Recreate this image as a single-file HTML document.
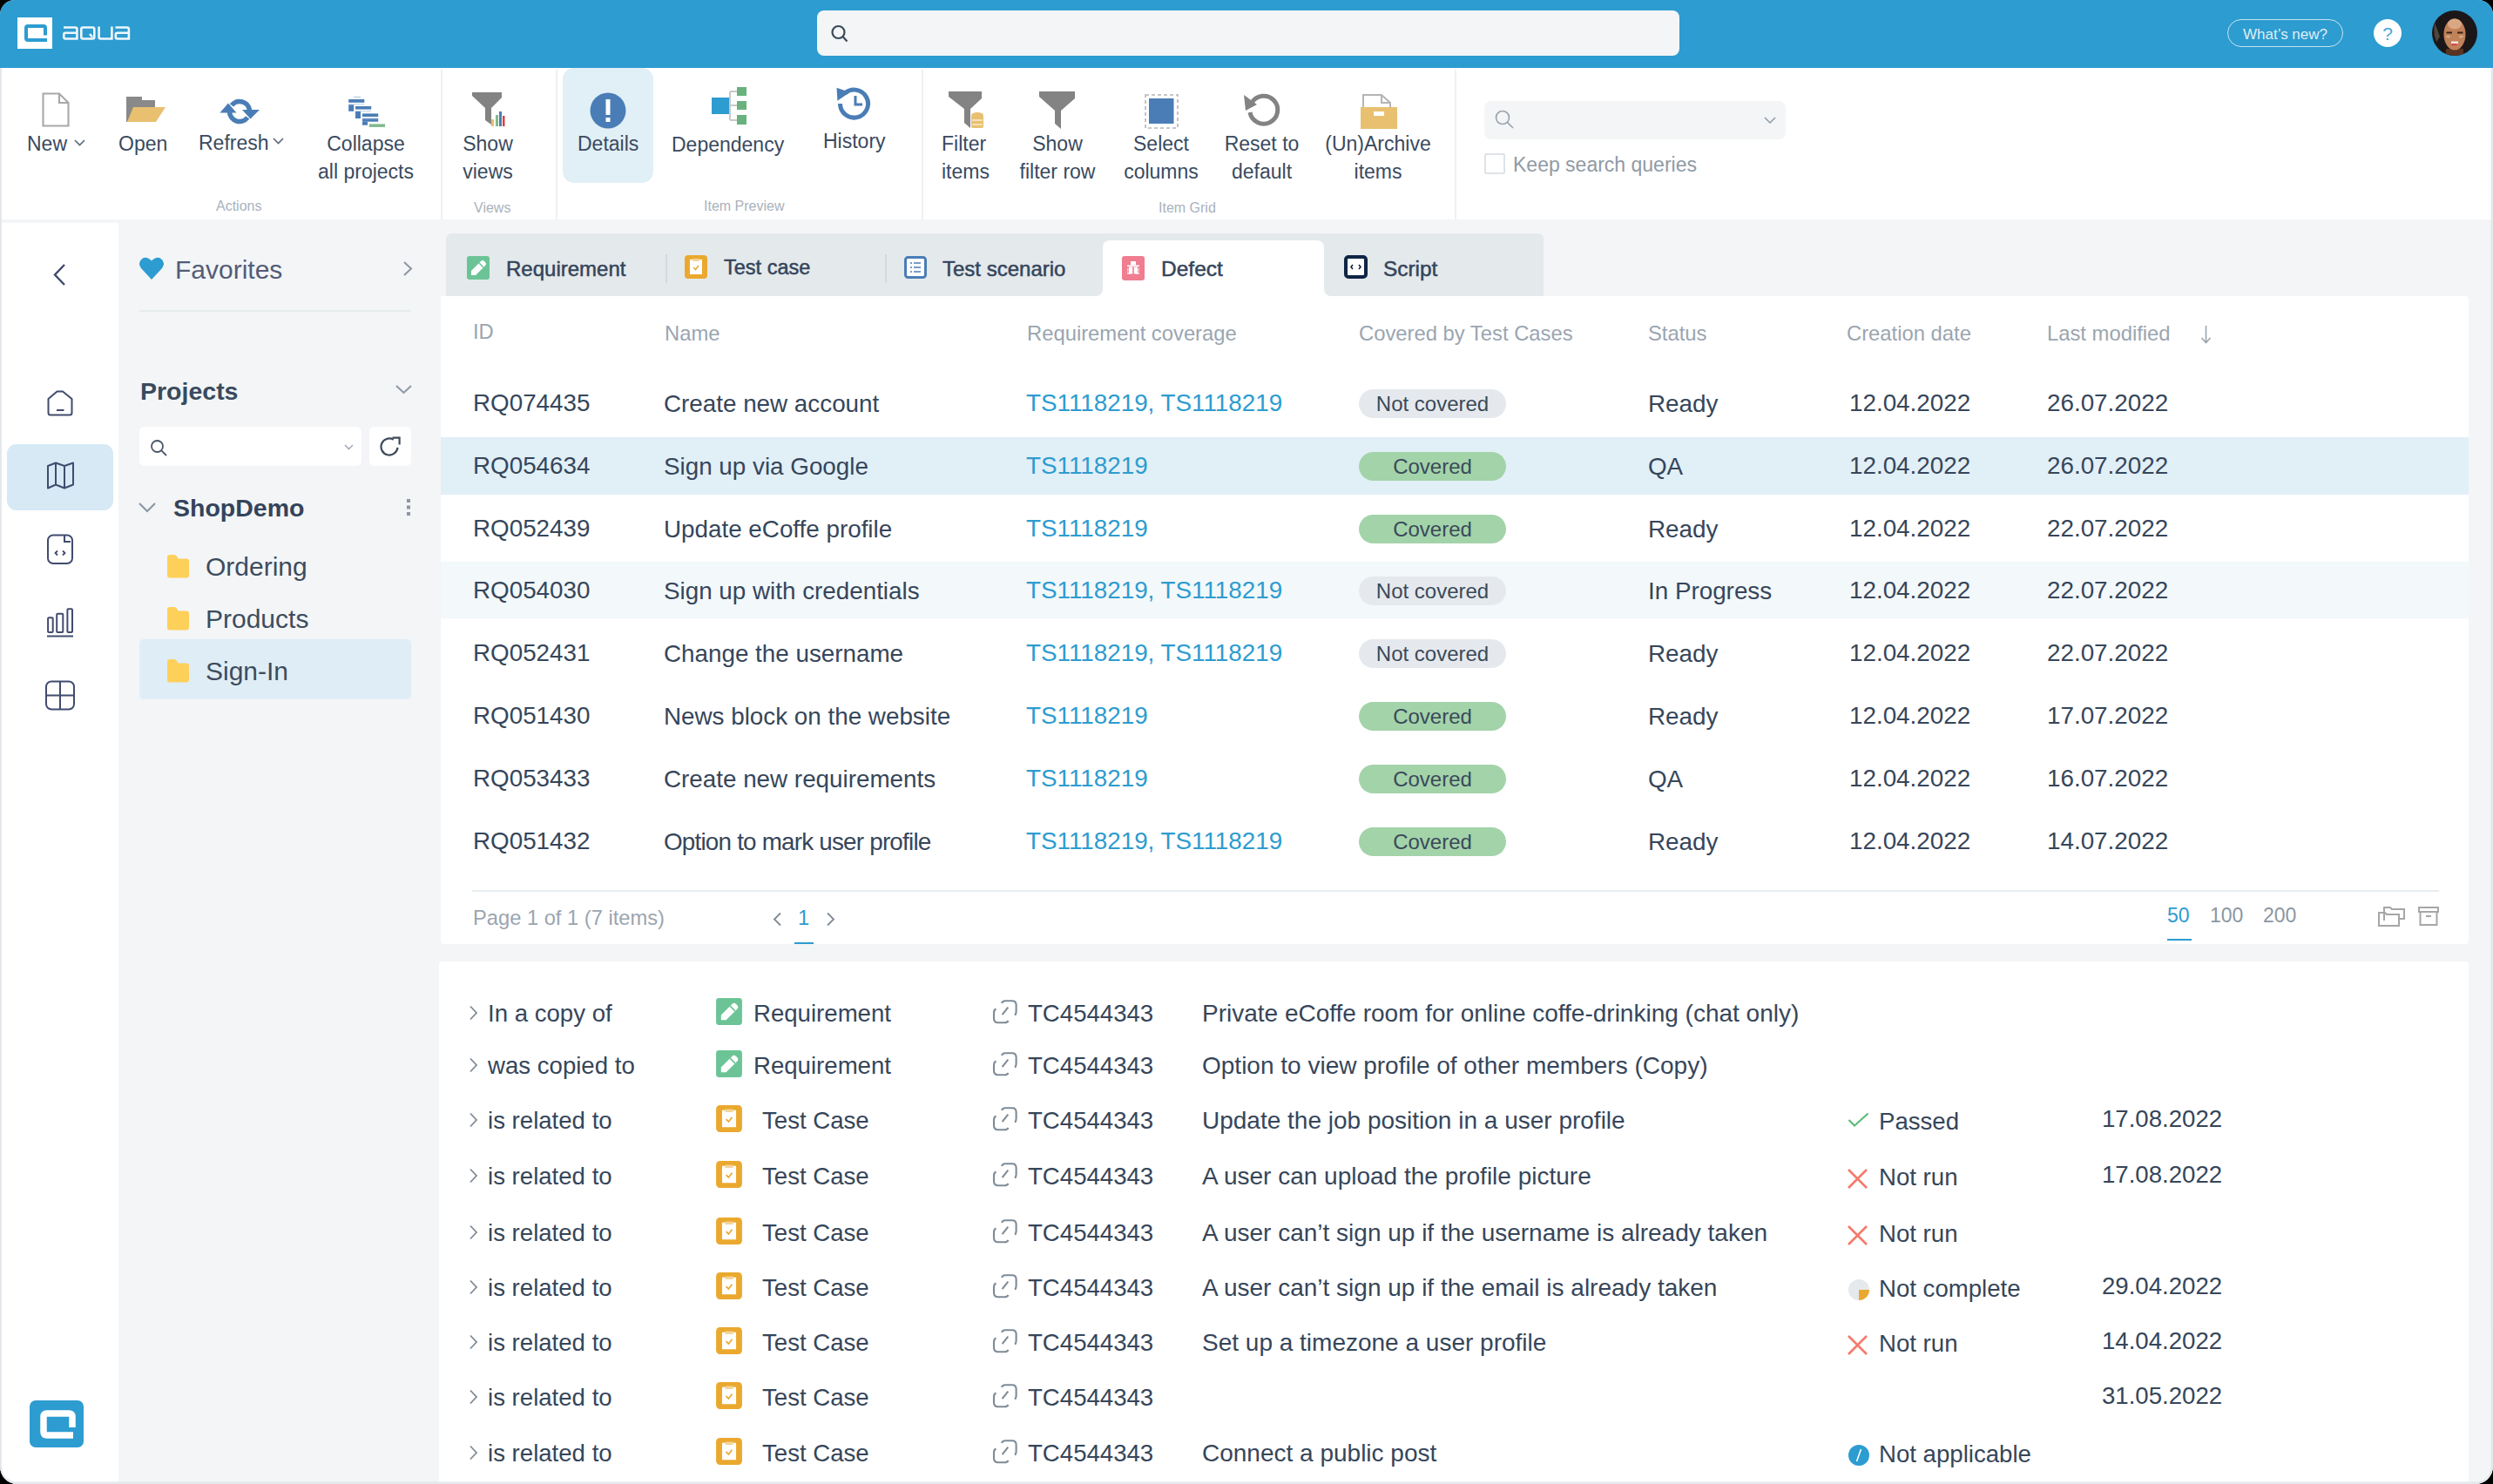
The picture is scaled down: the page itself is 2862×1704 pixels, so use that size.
<!DOCTYPE html>
<html><head><meta charset="utf-8">
<style>
*{box-sizing:border-box;margin:0;padding:0}
html,body{width:2862px;height:1704px;background:#000;overflow:hidden}
body{font-family:"Liberation Sans",sans-serif;color:#33435a;position:relative}
.app{position:absolute;left:0;top:0;width:2862px;height:1704px;border-radius:17px 17px 20px 20px;overflow:hidden;background:#f3f5f7}
.a{position:absolute;white-space:nowrap}
svg{position:absolute;overflow:visible}
.hdr{left:0;top:0;width:2862px;height:78px;background:#2d9cd0}
.tb{left:0;top:78px;width:2862px;height:174px;background:#fff}
.tl{font-size:23px;color:#3a4a5e;line-height:31.5px;text-align:center}
.gl{font-size:16px;color:#a9b2bb;line-height:16px}
.th{font-size:23.8px;line-height:30px;color:#9aa5b0}
.td{font-size:27.8px;line-height:34px;color:#36465a}
.lk{color:#2d9cd0}
.pill{width:169px;height:33px;border-radius:17px;font-size:24px;line-height:33px;text-align:center;color:#3a4a5a}
.cv{background:#a3d3a9}
.nc{background:#e5e9ed}
.tr{font-size:27.6px;line-height:32px;color:#36465a}
.sep{width:2px;background:#edf1f4}
</style></head><body>
<div class="app">
<!-- HEADER -->
<div class="a hdr"></div>
<div class="a" style="left:20px;top:20px;width:40px;height:36px;background:#fff"></div>
<svg style="left:20px;top:20px" width="40" height="36" viewBox="0 0 40 36"><path d="M32 20.5 V12 Q32 10 30 10 H12 Q10 10 10 12 V24 Q10 26 12 26 H34" fill="none" stroke="#2d9cd0" stroke-width="4"/></svg>
<svg style="left:72px;top:28px" width="78" height="20" viewBox="0 0 78 20">
<g fill="none" stroke="#eef7fc" stroke-width="2.6">
<path d="M1 3.5 H14.4 Q16.4 3.5 16.4 5.5 V16.5 H3.3 Q1.3 16.5 1.3 14.5 V11.8 Q1.3 9.8 3.3 9.8 H16.4"/>
<path d="M23.3 3.5 H34.3 Q36.3 3.5 36.3 5.5 V14.5 Q36.3 16.5 34.3 16.5 H23.3 Q21.3 16.5 21.3 14.5 V5.5 Q21.3 3.5 23.3 3.5Z M31 11 L34 14.5"/>
<path d="M41.6 2.5 V14.5 Q41.6 16.5 43.6 16.5 H56.4 V2.5"/>
<path d="M60.5 3.5 H73.9 Q75.9 3.5 75.9 5.5 V16.5 H62.8 Q60.8 16.5 60.8 14.5 V11.8 Q60.8 9.8 62.8 9.8 H75.9"/>
</g></svg>
<div class="a" style="left:938px;top:12px;width:990px;height:52px;background:#f3f5f7;border-radius:8px"></div>
<svg style="left:953px;top:28px" width="24" height="22" viewBox="0 0 24 22"><circle cx="9.5" cy="9" r="7" fill="none" stroke="#3c4a5a" stroke-width="2.2"/><path d="M14.5 14 L19.5 19.5" stroke="#3c4a5a" stroke-width="2.2"/></svg>
<div class="a" style="left:2557px;top:22px;width:133px;height:32px;border:1.6px solid rgba(255,255,255,.72);border-radius:16px"></div>
<div class="a" style="left:2557px;top:25px;width:133px;height:30px;line-height:30px;text-align:center;font-size:17px;color:rgba(255,255,255,.85)">What’s new?</div>
<div class="a" style="left:2725px;top:22px;width:32px;height:32px;border-radius:50%;background:#fff;color:#4aa8d6;font-size:21px;line-height:33px;text-align:center">?</div>
<svg style="left:2792px;top:12px" width="52" height="52" viewBox="0 0 52 52"><defs><clipPath id="avc"><circle cx="26" cy="26" r="26"/></clipPath></defs><g clip-path="url(#avc)">
<rect width="52" height="52" fill="#1b1719"/>
<path d="M3 14 Q1 26 5 36 L9 30 Z" fill="#7a6f58" opacity=".55"/>
<rect x="16" y="44" width="20" height="10" fill="#5a3322"/>
<ellipse cx="26" cy="27.5" rx="12.5" ry="18" fill="#c08259"/>
<ellipse cx="26" cy="15.5" rx="8" ry="6" fill="#d9a783"/>
<rect x="16.5" y="24.5" width="6.5" height="2" fill="#3a2218"/><rect x="29" y="24.5" width="6.5" height="2" fill="#3a2218"/>
<ellipse cx="18.5" cy="30" rx="2.5" ry="1.5" fill="#e6c0a0" opacity=".6"/><ellipse cx="33.5" cy="30" rx="2.5" ry="1.5" fill="#e6c0a0" opacity=".6"/>
<rect x="22" y="35.5" width="8" height="2.5" fill="#f3e4dc"/><rect x="22.5" y="38" width="6" height="2.2" fill="#e0444e"/>
</g></svg>

<!-- TOOLBAR -->
<div class="a tb"></div>
<div class="a sep" style="left:506px;top:80px;height:172px"></div>
<div class="a sep" style="left:638px;top:80px;height:172px"></div>
<div class="a sep" style="left:1058px;top:80px;height:172px"></div>
<div class="a sep" style="left:1670px;top:80px;height:172px"></div>

<!-- New -->
<svg style="left:48px;top:106px" width="32" height="40" viewBox="0 0 32 40"><path d="M1.5 1.5 H20 L30.5 12 V38.5 H1.5 Z M20 1.5 V12 H30.5" fill="#fff" stroke="#a8a8a8" stroke-width="2.1" stroke-linejoin="miter"/></svg>
<div class="a tl" style="left:31px;top:150px">New</div>
<svg style="left:85px;top:160px" width="13" height="8" viewBox="0 0 13 8"><path d="M1 1 L6.5 6.5 L12 1" fill="none" stroke="#5a6878" stroke-width="1.6"/></svg>
<!-- Open -->
<svg style="left:145px;top:110px" width="45" height="32" viewBox="0 0 45 32"><path d="M0 1 H18 V5 H33 V14 H10 L1 30 H0Z" fill="#898989"/><path d="M8 13 H45 L34 30 H1Z" fill="#e8c070"/></svg>
<div class="a tl" style="left:136px;top:150px">Open</div>
<!-- Refresh -->
<svg style="left:252px;top:110px" width="46" height="36" viewBox="0 0 46 36"><g fill="none" stroke="#4a7db6" stroke-width="5.5"><path d="M13.94 10.92 A11.5 11.5 0 0 1 34.39 16.4"/><path d="M11.53 18.8 A11.5 11.5 0 0 0 32.18 24.92"/></g><path d="M0.4 19.6 L19.5 19.6 L10 8.5Z" fill="#4a7db6"/><path d="M26 16 L46 16 L35.5 26.5Z" fill="#4a7db6"/></svg>
<div class="a tl" style="left:228px;top:149px">Refresh</div>
<svg style="left:313px;top:158px" width="13" height="8" viewBox="0 0 13 8"><path d="M1 1 L6.5 6.5 L12 1" fill="none" stroke="#5a6878" stroke-width="1.6"/></svg>
<!-- Collapse -->
<svg style="left:399px;top:108px" width="44" height="40" viewBox="0 0 44 40"><rect x="1.2" y="6.0" width="18.1" height="3.8" fill="#4a7db6"/><rect x="1.2" y="11.0" width="18.0" height="1.2" fill="#c9d8ea"/><rect x="1.2" y="12.3" width="6.0" height="7.5" fill="#4a7db6"/><rect x="9.0" y="14.0" width="18.2" height="3.6" fill="#4a7db6"/><rect x="9.0" y="19.0" width="18.0" height="1.2" fill="#c9d8ea"/><rect x="9.0" y="20.0" width="6.0" height="8.0" fill="#4a7db6"/><rect x="17.0" y="22.4" width="18.2" height="3.6" fill="#4a7db6"/><rect x="17.0" y="28.2" width="18.2" height="3.5" fill="#4a7db6"/><rect x="17.0" y="27.0" width="18.0" height="1.2" fill="#c9d8ea"/><rect x="17.0" y="31.7" width="6.0" height="4.0" fill="#4a7db6"/><rect x="25.0" y="34.4" width="18.0" height="3.5" fill="#7fba8d"/><rect x="7.0" y="2.6" width="8.0" height="2.0" fill="#c9d8ea"/></svg>
<div class="a tl" style="left:363px;top:150px;width:114px">Collapse<br>all projects</div>
<div class="a gl" style="left:248px;top:229px">Actions</div>
<!-- Show views -->
<svg style="left:542px;top:106px" width="37" height="39" viewBox="0 0 37 39"><path d="M0 0 H34 V6 L22 18 V37 L15 32 V18 L0 4Z" fill="#838383"/><rect x="22" y="31" width="3" height="8" fill="#e8c070"/><rect x="27" y="26" width="3" height="13" fill="#7fba8d"/><rect x="31" y="22" width="3" height="17" fill="#4a7db6"/><rect x="35" y="27" width="2.5" height="12" fill="#d94040"/></svg>
<div class="a tl" style="left:530px;top:150px;width:60px">Show<br>views</div>
<div class="a gl" style="left:544px;top:231px">Views</div>

<!-- Details -->
<div class="a" style="left:646px;top:78px;width:104px;height:132px;background:#e1eff7;border-radius:13px"></div>
<svg style="left:677px;top:106px" width="42" height="42" viewBox="0 0 42 42"><circle cx="21" cy="21" r="20.5" fill="#4a7db6"/><rect x="18.5" y="8" width="5" height="18" fill="#fff"/><rect x="18.5" y="29" width="5" height="5" fill="#fff"/></svg>
<div class="a tl" style="left:663px;top:150px">Details</div>
<!-- Dependency -->
<svg style="left:816px;top:99px" width="42" height="45" viewBox="0 0 42 45"><path d="M22 6 V39 M22 6 H30 M22 22 H30 M22 39 H30 M20 22 H22" fill="none" stroke="#c9c9c9" stroke-width="2"/><rect x="1" y="13" width="20" height="19" fill="#2d9cd0"/><rect x="30" y="1" width="11" height="10" fill="#69b27d"/><rect x="30" y="17" width="11" height="10" fill="#69b27d"/><rect x="30" y="33" width="11" height="11" fill="#69b27d"/></svg>
<div class="a tl" style="left:771px;top:151px">Dependency</div>
<!-- History -->
<svg style="left:958px;top:99px" width="44" height="41" viewBox="0 0 44 41"><path d="M6.5 20 A16 16 0 1 0 12 8" fill="none" stroke="#4a7db6" stroke-width="5"/><path d="M0 4 L16 4 L6 18Z" fill="#4a7db6" transform="rotate(20 8 10)"/><path d="M24 11 V21 H32" fill="none" stroke="#4a7db6" stroke-width="3"/></svg>
<div class="a tl" style="left:945px;top:147px">History</div>
<div class="a gl" style="left:808px;top:229px">Item Preview</div>

<!-- Filter items -->
<svg style="left:1089px;top:105px" width="41" height="43" viewBox="0 0 41 43"><path d="M0 0 H38 V8 L25 20 V42 L18 36 V20 L0 6Z" fill="#838383"/><g fill="#e8c070"><ellipse cx="33" cy="27" rx="7" ry="3"/><rect x="26" y="27" width="14" height="15" rx="2"/></g><g stroke="#fff" stroke-width="1.2"><path d="M27 33 H39 M27 38 H39"/></g></svg>
<div class="a tl" style="left:1081px;top:150px;width:55px;text-align:left">Filter<br>items</div>
<!-- Show filter row -->
<svg style="left:1193px;top:105px" width="41" height="43" viewBox="0 0 41 43"><path d="M0 0 H41 V8 L25 22 V43 L18 37 V22 L0 6Z" fill="#838383"/></svg>
<div class="a tl" style="left:1166px;top:150px;width:96px">Show<br>filter row</div>
<!-- Select columns -->
<svg style="left:1314px;top:108px" width="39" height="40" viewBox="0 0 39 40"><rect x="1" y="1" width="37" height="38" fill="none" stroke="#b5b5b5" stroke-width="1.6" stroke-dasharray="4 3"/><rect x="5" y="5" width="28.5" height="29" fill="#4a7db6"/></svg>
<div class="a tl" style="left:1288px;top:150px;width:90px">Select<br>columns</div>
<!-- Reset -->
<svg style="left:1428px;top:107px" width="43" height="41" viewBox="0 0 43 41"><path d="M8 13 A16 16 0 1 1 6 24" fill="none" stroke="#838383" stroke-width="5" transform="translate(1 -2)"/><path d="M0 2 L2 20 L15 13Z" fill="#838383"/></svg>
<div class="a tl" style="left:1405px;top:150px;width:87px">Reset to<br>default</div>
<!-- Archive -->
<svg style="left:1562px;top:108px" width="42" height="40" viewBox="0 0 42 40"><path d="M3 15 V1 H24 L34 10 V15" fill="#fff" stroke="#b5b5b5" stroke-width="2"/><path d="M24 1 V10 H34" fill="none" stroke="#b5b5b5" stroke-width="2"/><rect x="0" y="15" width="42" height="25" fill="#e8c070"/><rect x="15" y="20" width="12" height="5" fill="#fff"/></svg>
<div class="a tl" style="left:1520px;top:150px;width:124px">(Un)Archive<br>items</div>
<div class="a gl" style="left:1330px;top:231px">Item Grid</div>

<!-- search toolbar -->
<div class="a" style="left:1704px;top:116px;width:346px;height:44px;background:#f3f5f7;border-radius:8px"></div>
<svg style="left:1716px;top:126px" width="23" height="23" viewBox="0 0 23 23"><circle cx="9" cy="9" r="7.5" fill="none" stroke="#9aa4b0" stroke-width="1.7"/><path d="M14.5 14.5 L21 21" stroke="#9aa4b0" stroke-width="1.7"/></svg>
<svg style="left:2025px;top:134px" width="14" height="8" viewBox="0 0 14 8"><path d="M1 1 L7 7 L13 1" fill="none" stroke="#8d98a5" stroke-width="1.5"/></svg>
<div class="a" style="left:1704px;top:176px;width:24px;height:24px;border:2px solid #dfe3e7;border-radius:2px;background:#fff"></div>
<div class="a" style="left:1737px;top:174px;font-size:23px;line-height:30px;color:#8f9aa5">Keep search queries</div>


<!-- LEFT NAV -->
<div class="a" style="left:2px;top:256px;width:134px;height:1448px;background:#fff"></div>
<svg style="left:60px;top:302px" width="16" height="27" viewBox="0 0 16 27"><path d="M14 2 L3 13.5 L14 25" fill="none" stroke="#3f4a6c" stroke-width="2.4"/></svg>
<svg style="left:53px;top:447px" width="32" height="31" viewBox="0 0 32 31"><path d="M2.5 11 L12.5 2.5 H19 L29.5 11 V27 Q29.5 29.5 27 29.5 H5 Q2.5 29.5 2.5 27Z" fill="none" stroke="#414b6e" stroke-width="2" stroke-linejoin="round"/><path d="M12 24 H20.5" stroke="#414b6e" stroke-width="2"/></svg>
<div class="a" style="left:8px;top:510px;width:122px;height:76px;background:#d6e9f5;border-radius:11px"></div>
<svg style="left:53px;top:530px" width="33" height="33" viewBox="0 0 33 33"><path d="M2 5 L11 1.5 L21 5 L31 1.5 V26.5 L21 30.5 L11 26.5 L2 30.5Z M11 1.5 V26.5 M21 5 V30.5" fill="none" stroke="#414b6e" stroke-width="2" stroke-linejoin="round"/></svg>
<svg style="left:53px;top:613px" width="32" height="36" viewBox="0 0 32 36"><rect x="2" y="1.5" width="28" height="32.5" rx="6" fill="none" stroke="#414b6e" stroke-width="2"/><path d="M21 2 V9 H28" fill="none" stroke="#414b6e" stroke-width="2"/><path d="M13 19.5 L10.5 22 L13 24.5 M19 19.5 L21.5 22 L19 24.5" fill="none" stroke="#414b6e" stroke-width="1.8"/></svg>
<svg style="left:52px;top:697px" width="34" height="36" viewBox="0 0 34 36"><g fill="none" stroke="#414b6e" stroke-width="2"><rect x="3.1" y="12.3" width="5.6" height="16.7" rx="1"/><rect x="13.2" y="7.7" width="7.1" height="21.3" rx="1"/><rect x="25.4" y="2.2" width="5.6" height="26.8" rx="1"/><path d="M2 33.5 H32"/></g></svg>
<svg style="left:52px;top:781px" width="35" height="35" viewBox="0 0 35 35"><g fill="none" stroke="#414b6e" stroke-width="2"><rect x="1" y="1.5" width="32" height="32" rx="6"/><path d="M17 1.5 V33.5 M1 17.5 H33"/></g></svg>
<div class="a" style="left:34px;top:1608px;width:62px;height:54px;background:#2d9cd0;border-radius:7px"></div>
<svg style="left:46px;top:1619px" width="41" height="33" viewBox="0 0 41 33"><path d="M37 20 V8 Q37 4 33 4 H8 Q4 4 4 8 V25 Q4 29 8 29 H38" fill="none" stroke="#fff" stroke-width="7.5"/></svg>

<!-- SIDEBAR -->
<svg style="left:159px;top:294px" width="30" height="28" viewBox="0 0 30 26" preserveAspectRatio="none"><path d="M15 25 L3 13 Q-1 8 3 4 Q8 -1 15 5 Q22 -1 27 4 Q31 8 27 13Z" fill="#2d9cd0"/></svg>
<div class="a" style="left:201px;top:292px;font-size:30px;line-height:36px;color:#535c76">Favorites</div>
<svg style="left:462px;top:299px" width="12" height="19" viewBox="0 0 12 19"><path d="M2 2 L10 9.5 L2 17" fill="none" stroke="#8b97a3" stroke-width="2"/></svg>
<div class="a" style="left:160px;top:356px;width:312px;height:2px;background:#e6ebee"></div>
<div class="a" style="left:161px;top:432px;font-size:28.5px;line-height:34px;font-weight:bold;color:#3a4a5c">Projects</div>
<svg style="left:453px;top:441px" width="21" height="12" viewBox="0 0 21 12"><path d="M2 2 L10.5 10 L19 2" fill="none" stroke="#8b97a3" stroke-width="2"/></svg>
<div class="a" style="left:160px;top:490px;width:255px;height:45px;background:#fff;border-radius:6px"></div>
<svg style="left:172px;top:504px" width="21" height="20" viewBox="0 0 21 20"><circle cx="8.5" cy="8.5" r="6.5" fill="none" stroke="#4a5666" stroke-width="1.8"/><path d="M13.3 13.3 L19 19" stroke="#4a5666" stroke-width="1.8"/></svg>
<svg style="left:395px;top:510px" width="11" height="7" viewBox="0 0 11 7"><path d="M1 1 L5.5 5.5 L10 1" fill="none" stroke="#9aa5b0" stroke-width="1.4"/></svg>
<div class="a" style="left:424px;top:490px;width:48px;height:45px;background:#fff;border-radius:6px"></div>
<svg style="left:434px;top:500px" width="28" height="26" viewBox="0 0 28 26"><path d="M17.75 4.77 A9.5 9.5 0 1 0 22.46 13.83" fill="none" stroke="#3d4a5a" stroke-width="2.2"/><path d="M16.5 2.6 H24.6 V10.5" fill="none" stroke="#3d4a5a" stroke-width="2.2"/></svg>
<svg style="left:158px;top:576px" width="22" height="13" viewBox="0 0 22 13"><path d="M2 2 L11 11 L20 2" fill="none" stroke="#8b97a3" stroke-width="2.2"/></svg>
<div class="a" style="left:199px;top:566px;font-size:28.5px;line-height:34px;font-weight:bold;color:#34445a">ShopDemo</div>
<svg style="left:465px;top:572px" width="7" height="21" viewBox="0 0 7 21"><g fill="#8b97a3"><rect x="2" y="1" width="4" height="4"/><rect x="2" y="8.5" width="4" height="4"/><rect x="2" y="16" width="4" height="4"/></g></svg>
<div class="a" style="left:160px;top:734px;width:312px;height:69px;background:#dfedf6;border-radius:5px"></div>
<svg style="left:191px;top:636px" width="27" height="28" viewBox="0 0 27 28"><path d="M1 4 Q1 1 4 1 H9 Q11 1 12.5 3.5 L13.5 5.5 H23 Q26 5.5 26 8.5 V24.5 Q26 27.5 23 27.5 H4 Q1 27.5 1 24.5Z" fill="#fdd05a"/></svg>
<div class="a" style="left:236px;top:633px;font-size:30px;line-height:36px;color:#3d4c5d">Ordering</div>
<svg style="left:191px;top:696px" width="27" height="28" viewBox="0 0 27 28"><path d="M1 4 Q1 1 4 1 H9 Q11 1 12.5 3.5 L13.5 5.5 H23 Q26 5.5 26 8.5 V24.5 Q26 27.5 23 27.5 H4 Q1 27.5 1 24.5Z" fill="#fdd05a"/></svg>
<div class="a" style="left:236px;top:693px;font-size:30px;line-height:36px;color:#3d4c5d">Products</div>
<svg style="left:191px;top:756px" width="27" height="28" viewBox="0 0 27 28"><path d="M1 4 Q1 1 4 1 H9 Q11 1 12.5 3.5 L13.5 5.5 H23 Q26 5.5 26 8.5 V24.5 Q26 27.5 23 27.5 H4 Q1 27.5 1 24.5Z" fill="#fdd05a"/></svg>
<div class="a" style="left:236px;top:753px;font-size:30px;line-height:36px;color:#3d4c5d">Sign-In</div>

<!-- TABS -->
<div class="a" style="left:512px;top:268px;width:1260px;height:72px;background:#e4e9ec;border-radius:6px 6px 0 0"></div>
<div class="a" style="left:764px;top:292px;width:2px;height:33px;background:#d3d9de"></div>
<div class="a" style="left:1016px;top:292px;width:2px;height:33px;background:#d3d9de"></div>
<div class="a" style="left:1258px;top:330px;width:270px;height:10px;background:#fff"></div>
<div class="a" style="left:1250px;top:324px;width:16px;height:16px;background:#e4e9ec;border-radius:0 0 8px 0"></div>
<div class="a" style="left:1520px;top:324px;width:16px;height:16px;background:#e4e9ec;border-radius:0 0 0 8px"></div>
<div class="a" style="left:1266px;top:276px;width:254px;height:64px;background:#fff;border-radius:8px 8px 0 0"></div>
<svg style="left:536px;top:294px" width="26" height="27" viewBox="0 0 26 27"><rect width="26" height="27" rx="3" fill="#6cc496"/><path d="M5 22 L5 17 L16 6 Q18 4 20 6 L21 7 Q23 9 21 11 L10 22Z" fill="#fff"/><path d="M14 8 L19 13" stroke="#6cc496" stroke-width="1.5"/></svg>
<div class="a" style="left:581px;top:294px;font-size:24px;line-height:30px;color:#34455b;-webkit-text-stroke:0.5px #34455b">Requirement</div>
<svg style="left:786px;top:293px" width="26" height="27" viewBox="0 0 26 27"><rect width="26" height="27" rx="4" fill="#eaa92e"/><rect x="6" y="5" width="14" height="17" fill="#fff"/><rect x="9" y="4" width="8" height="3" fill="#f3d49a"/><path d="M10 14 L12.5 16.5 L16 12" fill="none" stroke="#eaa92e" stroke-width="1.5"/></svg>
<div class="a" style="left:831px;top:292px;font-size:23.5px;line-height:30px;color:#34455b;-webkit-text-stroke:0.5px #34455b">Test case</div>
<svg style="left:1038px;top:294px" width="26" height="26" viewBox="0 0 26 26"><rect x="1.5" y="1.5" width="23" height="23" rx="3" fill="#fff" stroke="#4a7db6" stroke-width="3"/><g stroke="#4a7db6" stroke-width="1.6"><path d="M7 8 H9 M11 8 H19 M7 13 H9 M11 13 H19 M7 18 H9 M11 18 H19"/></g></svg>
<div class="a" style="left:1082px;top:294px;font-size:24px;line-height:30px;color:#34455b;-webkit-text-stroke:0.5px #34455b">Test scenario</div>
<svg style="left:1288px;top:294px" width="26" height="28" viewBox="0 0 26 28"><rect width="26" height="28" rx="3" fill="#f07d90"/><g fill="#fff"><rect x="10" y="6" width="6" height="4.5"/><rect x="6" y="10.5" width="14" height="1.6"/><rect x="8" y="12.5" width="4.2" height="8"/><rect x="13.8" y="12.5" width="4.2" height="8"/><rect x="6" y="19" width="4" height="1.5"/><rect x="16" y="19" width="4" height="1.5"/><rect x="6" y="14" width="1.5" height="4" opacity=".6"/><rect x="18.5" y="14" width="1.5" height="4" opacity=".6"/></g></svg>
<div class="a" style="left:1333px;top:294px;font-size:24.5px;line-height:30px;color:#34455b;-webkit-text-stroke:0.5px #34455b">Defect</div>
<svg style="left:1543px;top:293px" width="27" height="27" viewBox="0 0 27 27"><rect x="2" y="2" width="23" height="23" rx="3" fill="#fff" stroke="#0f2544" stroke-width="4"/><path d="M10 11 L8 13.5 L10 16 M17 11 L19 13.5 L17 16" fill="none" stroke="#0f2544" stroke-width="1.6"/></svg>
<div class="a" style="left:1588px;top:294px;font-size:24.4px;line-height:30px;color:#34455b;-webkit-text-stroke:0.5px #34455b">Script</div>

<!-- CARD 1 -->
<div class="a" style="left:506px;top:340px;width:2328px;height:744px;background:#fff;border-radius:0 4px 4px 4px"></div>

<div class="a th" style="left:543px;top:366px">ID</div>
<div class="a th" style="left:763px;top:368px">Name</div>
<div class="a th" style="left:1179px;top:368px">Requirement coverage</div>
<div class="a th" style="left:1560px;top:368px">Covered by Test Cases</div>
<div class="a th" style="left:1892px;top:368px">Status</div>
<div class="a th" style="left:2120px;top:368px">Creation date</div>
<div class="a th" style="left:2350px;top:368px">Last modified</div>
<svg style="left:2526px;top:373px" width="13" height="22" viewBox="0 0 13 22"><path d="M6.5 1 V20 M1.5 15 L6.5 20.5 L11.5 15" fill="none" stroke="#9aa5b0" stroke-width="1.6"/></svg>
<div class="a td" style="left:543px;top:446px">RQ074435</div>
<div class="a td" style="left:762px;top:447px">Create new account</div>
<div class="a td lk" style="left:1178px;top:446px">TS1118219, TS1118219</div>
<div class="a pill nc" style="left:1560px;top:447px">Not covered</div>
<div class="a td" style="left:1892px;top:447px">Ready</div>
<div class="a td" style="left:2123px;top:446px">12.04.2022</div>
<div class="a td" style="left:2350px;top:446px">26.07.2022</div>
<div class="a" style="left:506px;top:502px;width:2328px;height:66px;background:#e1eff7"></div>
<div class="a td" style="left:543px;top:518px">RQ054634</div>
<div class="a td" style="left:762px;top:519px">Sign up via Google</div>
<div class="a td lk" style="left:1178px;top:518px">TS1118219</div>
<div class="a pill cv" style="left:1560px;top:519px">Covered</div>
<div class="a td" style="left:1892px;top:519px">QA</div>
<div class="a td" style="left:2123px;top:518px">12.04.2022</div>
<div class="a td" style="left:2350px;top:518px">26.07.2022</div>
<div class="a td" style="left:543px;top:590px">RQ052439</div>
<div class="a td" style="left:762px;top:591px">Update eCoffe profile</div>
<div class="a td lk" style="left:1178px;top:590px">TS1118219</div>
<div class="a pill cv" style="left:1560px;top:591px">Covered</div>
<div class="a td" style="left:1892px;top:591px">Ready</div>
<div class="a td" style="left:2123px;top:590px">12.04.2022</div>
<div class="a td" style="left:2350px;top:590px">22.07.2022</div>
<div class="a" style="left:506px;top:645px;width:2328px;height:65px;background:#f3f8fa"></div>
<div class="a td" style="left:543px;top:661px">RQ054030</div>
<div class="a td" style="left:762px;top:662px">Sign up with credentials</div>
<div class="a td lk" style="left:1178px;top:661px">TS1118219, TS1118219</div>
<div class="a pill nc" style="left:1560px;top:662px">Not covered</div>
<div class="a td" style="left:1892px;top:662px">In Progress</div>
<div class="a td" style="left:2123px;top:661px">12.04.2022</div>
<div class="a td" style="left:2350px;top:661px">22.07.2022</div>
<div class="a td" style="left:543px;top:733px">RQ052431</div>
<div class="a td" style="left:762px;top:734px">Change the username</div>
<div class="a td lk" style="left:1178px;top:733px">TS1118219, TS1118219</div>
<div class="a pill nc" style="left:1560px;top:734px">Not covered</div>
<div class="a td" style="left:1892px;top:734px">Ready</div>
<div class="a td" style="left:2123px;top:733px">12.04.2022</div>
<div class="a td" style="left:2350px;top:733px">22.07.2022</div>
<div class="a td" style="left:543px;top:805px">RQ051430</div>
<div class="a td" style="left:762px;top:806px">News block on the website</div>
<div class="a td lk" style="left:1178px;top:805px">TS1118219</div>
<div class="a pill cv" style="left:1560px;top:806px">Covered</div>
<div class="a td" style="left:1892px;top:806px">Ready</div>
<div class="a td" style="left:2123px;top:805px">12.04.2022</div>
<div class="a td" style="left:2350px;top:805px">17.07.2022</div>
<div class="a td" style="left:543px;top:877px">RQ053433</div>
<div class="a td" style="left:762px;top:878px">Create new requirements</div>
<div class="a td lk" style="left:1178px;top:877px">TS1118219</div>
<div class="a pill cv" style="left:1560px;top:878px">Covered</div>
<div class="a td" style="left:1892px;top:878px">QA</div>
<div class="a td" style="left:2123px;top:877px">12.04.2022</div>
<div class="a td" style="left:2350px;top:877px">16.07.2022</div>
<div class="a td" style="left:543px;top:949px">RQ051432</div>
<div class="a td" style="left:762px;top:950px;letter-spacing:-0.78px">Option to mark user profile</div>
<div class="a td lk" style="left:1178px;top:949px">TS1118219, TS1118219</div>
<div class="a pill cv" style="left:1560px;top:950px">Covered</div>
<div class="a td" style="left:1892px;top:950px">Ready</div>
<div class="a td" style="left:2123px;top:949px">12.04.2022</div>
<div class="a td" style="left:2350px;top:949px">14.07.2022</div>

<div class="a" style="left:542px;top:1022px;width:2258px;height:2px;background:#e6edf0"></div>
<div class="a" style="left:543px;top:1039px;font-size:23.7px;line-height:30px;color:#9aa5b0">Page 1 of 1 (7 items)</div>
<svg style="left:886px;top:1047px" width="12" height="17" viewBox="0 0 12 17"><path d="M10 1.5 L3 8.5 L10 15.5" fill="none" stroke="#7e8a96" stroke-width="1.8"/></svg>
<div class="a" style="left:916px;top:1039px;font-size:23.7px;line-height:30px;color:#2d9cd0">1</div>
<div class="a" style="left:912px;top:1082px;width:22px;height:2px;background:#2d9cd0"></div>
<svg style="left:948px;top:1047px" width="12" height="17" viewBox="0 0 12 17"><path d="M2 1.5 L9 8.5 L2 15.5" fill="none" stroke="#7e8a96" stroke-width="1.8"/></svg>
<div class="a" style="left:2488px;top:1036px;font-size:23px;line-height:30px;color:#2d9cd0">50</div>
<div class="a" style="left:2488px;top:1078px;width:28px;height:2px;background:#2d9cd0"></div>
<div class="a" style="left:2537px;top:1036px;font-size:23px;line-height:30px;color:#8a96a2">100</div>
<div class="a" style="left:2598px;top:1036px;font-size:23px;line-height:30px;color:#8a96a2">200</div>
<svg style="left:2730px;top:1040px" width="31" height="24" viewBox="0 0 31 24"><g fill="none" stroke="#a6a6a6" stroke-width="2"><path d="M7 17 V2 H14 L16 4 H30 V15 H24"/><path d="M1 8 H8 L10 10 H24 V23 H1Z"/></g></svg>
<svg style="left:2776px;top:1041px" width="24" height="22" viewBox="0 0 24 22"><g fill="none" stroke="#a6a6a6" stroke-width="2"><rect x="1" y="1" width="22" height="5"/><path d="M2.5 6 V21 H21.5 V6"/><path d="M9 11 H15"/></g></svg>

<!-- CARD 2 -->
<div class="a" style="left:504px;top:1104px;width:2330px;height:620px;background:#fff;border-radius:4px"></div>

<svg style="left:538px;top:1154px" width="11" height="18" viewBox="0 0 11 18"><path d="M2 1.5 L9 9 L2 16.5" fill="none" stroke="#7e8a96" stroke-width="1.8"/></svg>
<div class="a tr" style="left:560px;top:1148px">In a copy of</div>
<svg style="left:822px;top:1146px" width="30" height="31" viewBox="0 0 26 27"><rect width="26" height="27" rx="3" fill="#6cc496"/><path d="M5 22 L5 17 L16 6 Q18 4 20 6 L21 7 Q23 9 21 11 L10 22Z" fill="#fff"/><path d="M14 8 L19 13" stroke="#6cc496" stroke-width="1.5"/></svg>
<div class="a tr" style="left:865px;top:1148px">Requirement</div>
<svg style="left:1138px;top:1147px" width="30" height="30" viewBox="0 0 30 30"><g fill="none" stroke="#7f8b97" stroke-width="2.1"><path d="M12 5 Q13 2.2 16 2.2 H24 Q28.6 2.2 28.6 7 V14.5 Q28.6 17.5 27 18.5"/><path d="M5.5 11.5 Q3 12.5 3 16 V22.5 Q3 27.2 8 27.2 H15.5 Q18.5 27.2 19.5 25"/><path d="M12.6 18.2 L19.3 9.7"/></g></svg>
<div class="a tr" style="left:1180px;top:1148px">TC4544343</div>
<div class="a tr" style="left:1380px;top:1148px;font-size:28px">Private eCoffe room for online coffe-drinking (chat only)</div>
<svg style="left:538px;top:1214px" width="11" height="18" viewBox="0 0 11 18"><path d="M2 1.5 L9 9 L2 16.5" fill="none" stroke="#7e8a96" stroke-width="1.8"/></svg>
<div class="a tr" style="left:560px;top:1208px">was copied to</div>
<svg style="left:822px;top:1206px" width="30" height="31" viewBox="0 0 26 27"><rect width="26" height="27" rx="3" fill="#6cc496"/><path d="M5 22 L5 17 L16 6 Q18 4 20 6 L21 7 Q23 9 21 11 L10 22Z" fill="#fff"/><path d="M14 8 L19 13" stroke="#6cc496" stroke-width="1.5"/></svg>
<div class="a tr" style="left:865px;top:1208px">Requirement</div>
<svg style="left:1138px;top:1207px" width="30" height="30" viewBox="0 0 30 30"><g fill="none" stroke="#7f8b97" stroke-width="2.1"><path d="M12 5 Q13 2.2 16 2.2 H24 Q28.6 2.2 28.6 7 V14.5 Q28.6 17.5 27 18.5"/><path d="M5.5 11.5 Q3 12.5 3 16 V22.5 Q3 27.2 8 27.2 H15.5 Q18.5 27.2 19.5 25"/><path d="M12.6 18.2 L19.3 9.7"/></g></svg>
<div class="a tr" style="left:1180px;top:1208px">TC4544343</div>
<div class="a tr" style="left:1380px;top:1208px;font-size:28px">Option to view profile of other members (Copy)</div>
<svg style="left:538px;top:1277px" width="11" height="18" viewBox="0 0 11 18"><path d="M2 1.5 L9 9 L2 16.5" fill="none" stroke="#7e8a96" stroke-width="1.8"/></svg>
<div class="a tr" style="left:560px;top:1271px">is related to</div>
<svg style="left:822px;top:1269px" width="30" height="31" viewBox="0 0 26 27"><rect width="26" height="27" rx="4" fill="#eaa92e"/><rect x="6" y="5" width="14" height="17" fill="#fff"/><rect x="9" y="4" width="8" height="3" fill="#f3d49a"/><path d="M10 14 L12.5 16.5 L16 12" fill="none" stroke="#eaa92e" stroke-width="1.5"/></svg>
<div class="a tr" style="left:875px;top:1271px">Test Case</div>
<svg style="left:1138px;top:1270px" width="30" height="30" viewBox="0 0 30 30"><g fill="none" stroke="#7f8b97" stroke-width="2.1"><path d="M12 5 Q13 2.2 16 2.2 H24 Q28.6 2.2 28.6 7 V14.5 Q28.6 17.5 27 18.5"/><path d="M5.5 11.5 Q3 12.5 3 16 V22.5 Q3 27.2 8 27.2 H15.5 Q18.5 27.2 19.5 25"/><path d="M12.6 18.2 L19.3 9.7"/></g></svg>
<div class="a tr" style="left:1180px;top:1271px">TC4544343</div>
<div class="a tr" style="left:1380px;top:1271px;font-size:28px">Update the job position in a user profile</div>
<svg style="left:2121px;top:1277px" width="25" height="18" viewBox="0 0 25 18"><path d="M1.5 9 L8 15.5 L23.5 1.5" fill="none" stroke="#5bbd7a" stroke-width="2.2"/></svg>
<div class="a tr" style="left:2157px;top:1272px">Passed</div>
<div class="a tr" style="left:2413px;top:1269px">17.08.2022</div>
<svg style="left:538px;top:1341px" width="11" height="18" viewBox="0 0 11 18"><path d="M2 1.5 L9 9 L2 16.5" fill="none" stroke="#7e8a96" stroke-width="1.8"/></svg>
<div class="a tr" style="left:560px;top:1335px">is related to</div>
<svg style="left:822px;top:1333px" width="30" height="31" viewBox="0 0 26 27"><rect width="26" height="27" rx="4" fill="#eaa92e"/><rect x="6" y="5" width="14" height="17" fill="#fff"/><rect x="9" y="4" width="8" height="3" fill="#f3d49a"/><path d="M10 14 L12.5 16.5 L16 12" fill="none" stroke="#eaa92e" stroke-width="1.5"/></svg>
<div class="a tr" style="left:875px;top:1335px">Test Case</div>
<svg style="left:1138px;top:1334px" width="30" height="30" viewBox="0 0 30 30"><g fill="none" stroke="#7f8b97" stroke-width="2.1"><path d="M12 5 Q13 2.2 16 2.2 H24 Q28.6 2.2 28.6 7 V14.5 Q28.6 17.5 27 18.5"/><path d="M5.5 11.5 Q3 12.5 3 16 V22.5 Q3 27.2 8 27.2 H15.5 Q18.5 27.2 19.5 25"/><path d="M12.6 18.2 L19.3 9.7"/></g></svg>
<div class="a tr" style="left:1180px;top:1335px">TC4544343</div>
<div class="a tr" style="left:1380px;top:1335px;font-size:28px">A user can upload the profile picture</div>
<svg style="left:2120px;top:1341px" width="25" height="25" viewBox="0 0 25 25"><path d="M2 2 L23 23 M23 2 L2 23" fill="none" stroke="#f47a6c" stroke-width="2.6"/></svg>
<div class="a tr" style="left:2157px;top:1336px">Not run</div>
<div class="a tr" style="left:2413px;top:1333px">17.08.2022</div>
<svg style="left:538px;top:1406px" width="11" height="18" viewBox="0 0 11 18"><path d="M2 1.5 L9 9 L2 16.5" fill="none" stroke="#7e8a96" stroke-width="1.8"/></svg>
<div class="a tr" style="left:560px;top:1400px">is related to</div>
<svg style="left:822px;top:1398px" width="30" height="31" viewBox="0 0 26 27"><rect width="26" height="27" rx="4" fill="#eaa92e"/><rect x="6" y="5" width="14" height="17" fill="#fff"/><rect x="9" y="4" width="8" height="3" fill="#f3d49a"/><path d="M10 14 L12.5 16.5 L16 12" fill="none" stroke="#eaa92e" stroke-width="1.5"/></svg>
<div class="a tr" style="left:875px;top:1400px">Test Case</div>
<svg style="left:1138px;top:1399px" width="30" height="30" viewBox="0 0 30 30"><g fill="none" stroke="#7f8b97" stroke-width="2.1"><path d="M12 5 Q13 2.2 16 2.2 H24 Q28.6 2.2 28.6 7 V14.5 Q28.6 17.5 27 18.5"/><path d="M5.5 11.5 Q3 12.5 3 16 V22.5 Q3 27.2 8 27.2 H15.5 Q18.5 27.2 19.5 25"/><path d="M12.6 18.2 L19.3 9.7"/></g></svg>
<div class="a tr" style="left:1180px;top:1400px">TC4544343</div>
<div class="a tr" style="left:1380px;top:1400px;font-size:28px">A user can’t sign up if the username is already taken</div>
<svg style="left:2120px;top:1406px" width="25" height="25" viewBox="0 0 25 25"><path d="M2 2 L23 23 M23 2 L2 23" fill="none" stroke="#f47a6c" stroke-width="2.6"/></svg>
<div class="a tr" style="left:2157px;top:1401px">Not run</div>
<svg style="left:538px;top:1469px" width="11" height="18" viewBox="0 0 11 18"><path d="M2 1.5 L9 9 L2 16.5" fill="none" stroke="#7e8a96" stroke-width="1.8"/></svg>
<div class="a tr" style="left:560px;top:1463px">is related to</div>
<svg style="left:822px;top:1461px" width="30" height="31" viewBox="0 0 26 27"><rect width="26" height="27" rx="4" fill="#eaa92e"/><rect x="6" y="5" width="14" height="17" fill="#fff"/><rect x="9" y="4" width="8" height="3" fill="#f3d49a"/><path d="M10 14 L12.5 16.5 L16 12" fill="none" stroke="#eaa92e" stroke-width="1.5"/></svg>
<div class="a tr" style="left:875px;top:1463px">Test Case</div>
<svg style="left:1138px;top:1462px" width="30" height="30" viewBox="0 0 30 30"><g fill="none" stroke="#7f8b97" stroke-width="2.1"><path d="M12 5 Q13 2.2 16 2.2 H24 Q28.6 2.2 28.6 7 V14.5 Q28.6 17.5 27 18.5"/><path d="M5.5 11.5 Q3 12.5 3 16 V22.5 Q3 27.2 8 27.2 H15.5 Q18.5 27.2 19.5 25"/><path d="M12.6 18.2 L19.3 9.7"/></g></svg>
<div class="a tr" style="left:1180px;top:1463px">TC4544343</div>
<div class="a tr" style="left:1380px;top:1463px;font-size:28px">A user can’t sign up if the email is already taken</div>
<svg style="left:2122px;top:1469px" width="24" height="24" viewBox="0 0 24 24"><circle cx="12" cy="12" r="12" fill="#e4e9ec"/><path d="M12 12 H24 A12 12 0 0 1 12 24Z" fill="#eaa92e"/></svg>
<div class="a tr" style="left:2157px;top:1464px">Not complete</div>
<div class="a tr" style="left:2413px;top:1461px">29.04.2022</div>
<svg style="left:538px;top:1532px" width="11" height="18" viewBox="0 0 11 18"><path d="M2 1.5 L9 9 L2 16.5" fill="none" stroke="#7e8a96" stroke-width="1.8"/></svg>
<div class="a tr" style="left:560px;top:1526px">is related to</div>
<svg style="left:822px;top:1524px" width="30" height="31" viewBox="0 0 26 27"><rect width="26" height="27" rx="4" fill="#eaa92e"/><rect x="6" y="5" width="14" height="17" fill="#fff"/><rect x="9" y="4" width="8" height="3" fill="#f3d49a"/><path d="M10 14 L12.5 16.5 L16 12" fill="none" stroke="#eaa92e" stroke-width="1.5"/></svg>
<div class="a tr" style="left:875px;top:1526px">Test Case</div>
<svg style="left:1138px;top:1525px" width="30" height="30" viewBox="0 0 30 30"><g fill="none" stroke="#7f8b97" stroke-width="2.1"><path d="M12 5 Q13 2.2 16 2.2 H24 Q28.6 2.2 28.6 7 V14.5 Q28.6 17.5 27 18.5"/><path d="M5.5 11.5 Q3 12.5 3 16 V22.5 Q3 27.2 8 27.2 H15.5 Q18.5 27.2 19.5 25"/><path d="M12.6 18.2 L19.3 9.7"/></g></svg>
<div class="a tr" style="left:1180px;top:1526px">TC4544343</div>
<div class="a tr" style="left:1380px;top:1526px;font-size:28px">Set up a timezone a user profile</div>
<svg style="left:2120px;top:1532px" width="25" height="25" viewBox="0 0 25 25"><path d="M2 2 L23 23 M23 2 L2 23" fill="none" stroke="#f47a6c" stroke-width="2.6"/></svg>
<div class="a tr" style="left:2157px;top:1527px">Not run</div>
<div class="a tr" style="left:2413px;top:1524px">14.04.2022</div>
<svg style="left:538px;top:1595px" width="11" height="18" viewBox="0 0 11 18"><path d="M2 1.5 L9 9 L2 16.5" fill="none" stroke="#7e8a96" stroke-width="1.8"/></svg>
<div class="a tr" style="left:560px;top:1589px">is related to</div>
<svg style="left:822px;top:1587px" width="30" height="31" viewBox="0 0 26 27"><rect width="26" height="27" rx="4" fill="#eaa92e"/><rect x="6" y="5" width="14" height="17" fill="#fff"/><rect x="9" y="4" width="8" height="3" fill="#f3d49a"/><path d="M10 14 L12.5 16.5 L16 12" fill="none" stroke="#eaa92e" stroke-width="1.5"/></svg>
<div class="a tr" style="left:875px;top:1589px">Test Case</div>
<svg style="left:1138px;top:1588px" width="30" height="30" viewBox="0 0 30 30"><g fill="none" stroke="#7f8b97" stroke-width="2.1"><path d="M12 5 Q13 2.2 16 2.2 H24 Q28.6 2.2 28.6 7 V14.5 Q28.6 17.5 27 18.5"/><path d="M5.5 11.5 Q3 12.5 3 16 V22.5 Q3 27.2 8 27.2 H15.5 Q18.5 27.2 19.5 25"/><path d="M12.6 18.2 L19.3 9.7"/></g></svg>
<div class="a tr" style="left:1180px;top:1589px">TC4544343</div>
<div class="a tr" style="left:2413px;top:1587px">31.05.2022</div>
<svg style="left:538px;top:1659px" width="11" height="18" viewBox="0 0 11 18"><path d="M2 1.5 L9 9 L2 16.5" fill="none" stroke="#7e8a96" stroke-width="1.8"/></svg>
<div class="a tr" style="left:560px;top:1653px">is related to</div>
<svg style="left:822px;top:1651px" width="30" height="31" viewBox="0 0 26 27"><rect width="26" height="27" rx="4" fill="#eaa92e"/><rect x="6" y="5" width="14" height="17" fill="#fff"/><rect x="9" y="4" width="8" height="3" fill="#f3d49a"/><path d="M10 14 L12.5 16.5 L16 12" fill="none" stroke="#eaa92e" stroke-width="1.5"/></svg>
<div class="a tr" style="left:875px;top:1653px">Test Case</div>
<svg style="left:1138px;top:1652px" width="30" height="30" viewBox="0 0 30 30"><g fill="none" stroke="#7f8b97" stroke-width="2.1"><path d="M12 5 Q13 2.2 16 2.2 H24 Q28.6 2.2 28.6 7 V14.5 Q28.6 17.5 27 18.5"/><path d="M5.5 11.5 Q3 12.5 3 16 V22.5 Q3 27.2 8 27.2 H15.5 Q18.5 27.2 19.5 25"/><path d="M12.6 18.2 L19.3 9.7"/></g></svg>
<div class="a tr" style="left:1180px;top:1653px">TC4544343</div>
<div class="a tr" style="left:1380px;top:1653px;font-size:28px">Connect a public post</div>
<svg style="left:2122px;top:1659px" width="24" height="24" viewBox="0 0 24 24"><circle cx="12" cy="12" r="12" fill="#2d9cd0"/><path d="M14.5 5 L9.5 19" stroke="#fff" stroke-width="1.6"/></svg>
<div class="a tr" style="left:2157px;top:1654px">Not applicable</div><div class="a" style="left:0;top:78px;width:2862px;height:1626px;border-radius:0 0 20px 20px;box-shadow:inset 2px 0 0 #e4e8ed, inset -2.5px 0 0 #e4e8ed, inset 0 -2.5px 0 #e4e8ed;pointer-events:none"></div>
</div>
</body></html>
